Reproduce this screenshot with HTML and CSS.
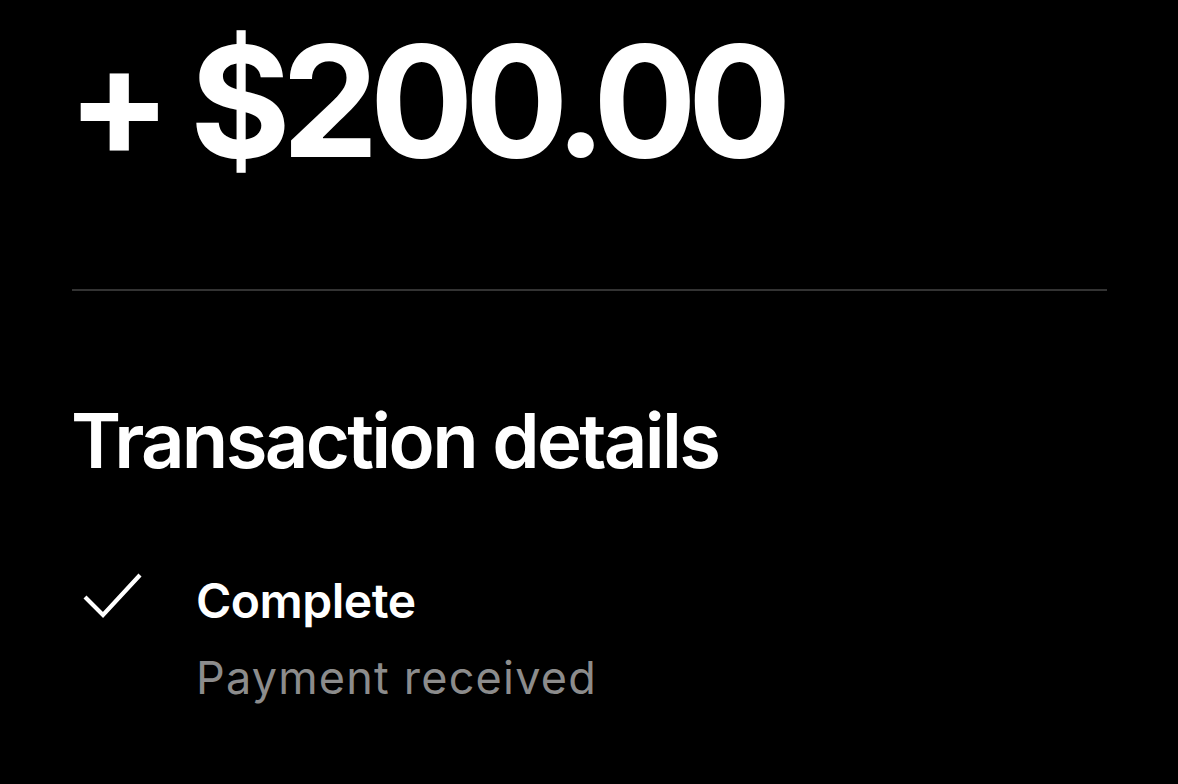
FILE: index.html
```html
<!DOCTYPE html>
<html>
<head>
<meta charset="utf-8">
<link rel="stylesheet" href="styles.css">
</head>
<body>
<main class="page">
  <div class="amount">+ $200.00</div>
  <hr class="divider">
  <h2 class="heading">Transaction details</h2>
  <div class="status-row">
    <div class="status-icon">
      <svg width="64" height="52" viewBox="0 0 64 52" fill="none">
        <polyline points="5,27 23,45 60,5" stroke="#fff" stroke-width="4.2" stroke-linejoin="miter" stroke-linecap="butt"/>
      </svg>
    </div>
    <div class="status-text">
      <div class="status-title">Complete</div>
      <div class="status-sub">Payment received</div>
    </div>
  </div>
</main>
</body>
</html>
```
FILE: styles.css
```css
html, body {
  margin: 0;
  padding: 0;
  background: #000;
}
body {
  width: 1178px;
  height: 784px;
  overflow: hidden;
  font-family: Inter, "Noto Sans", "Liberation Sans", sans-serif;
  color: #fff;
}
.page {
  padding: 24px 71px 0 72px;
}
.amount {
  font-size: 154px;
  line-height: 154px;
  font-weight: 700;
  letter-spacing: -9px;
  margin-left: -5px;
}
.divider {
  border: none;
  height: 2px;
  background: #333;
  margin: 111px 0 0 0;
}
.heading {
  margin: 111px 0 0 0;
  font-size: 76px;
  line-height: 76px;
  font-weight: 600;
  letter-spacing: -2.7px;
  margin-left: -1px;
}
.status-row {
  display: flex;
  margin-top: 93px;
}
.status-icon {
  width: 124px;
  flex: none;
  padding-left: 8px;
  box-sizing: border-box;
}
.status-icon svg {
  display: block;
  margin-top: -1px;
}
.status-text {
  display: flex;
  flex-direction: column;
}
.status-title {
  font-size: 48px;
  line-height: 56px;
  font-weight: 600;
  letter-spacing: -0.5px;
  margin-top: 2px;
}
.status-sub {
  font-size: 45px;
  line-height: 52px;
  font-weight: 400;
  color: #8c8c8c;
  margin-top: 23px;
  letter-spacing: 1.2px;
}
```
